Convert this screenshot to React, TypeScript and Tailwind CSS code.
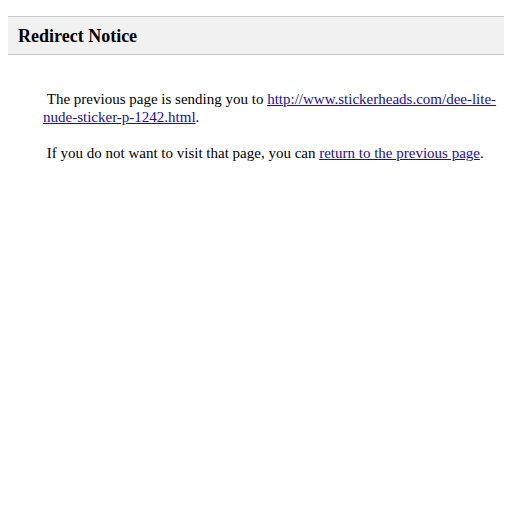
export default function App() {
  return (
    <div className="min-h-screen bg-white px-2 pt-4 text-black">
      <div className="font-['Liberation_Serif',serif]">
        {/* Header bar */}
        <div className="border-y border-[#c8c8c8] bg-[#f1f1f1] pl-[10px] h-[39px] flex items-center">
          <b className="text-[18px] leading-none">Redirect Notice</b>
        </div>

        {/* Body */}
        <div className="ml-[35px] mt-[35px] text-[15px] leading-[18px]">
          <p>
            &nbsp;The previous page is sending you to{' '}
            <a href="#" className="text-[#1a0dab] underline">
              http://www.stickerheads.com/dee-lite-nude-sticker-p-1242.html
            </a>
            .
          </p>
          <p className="mt-[18px]">
            &nbsp;If you do not want to visit that page, you can{' '}
            <a href="#" className="text-[#1a0dab] underline">
              return to the previous page
            </a>
            .
          </p>
        </div>
      </div>
    </div>
  )
}
